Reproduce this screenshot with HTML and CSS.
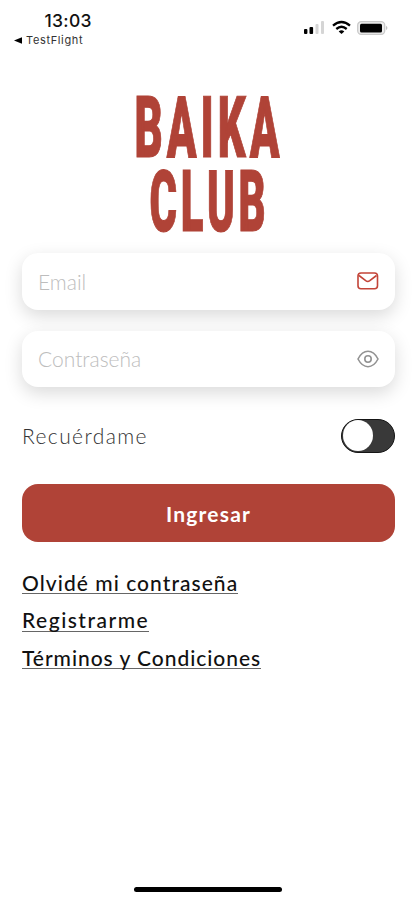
FILE: index.html
```html
<!DOCTYPE html>
<html lang="es">
<head>
<meta charset="utf-8">
<meta name="viewport" content="width=device-width, initial-scale=1">
<title>Baika Club</title>
<link rel="stylesheet" href="styles.css">
</head>
<body>
<header class="status">
  <div class="status-left">
    <div class="clock">13:03</div>
    <div class="back"><svg width="8" height="7" viewBox="0 0 8 7"><path d="M0 3.5 8 .2v6.6z"/></svg><span>TestFlight</span></div>
  </div>
  <svg class="indicators" width="86" height="16" viewBox="0 0 86 16">
    <g><rect x="1" y="9" width="3.4" height="5" rx="1"/><rect x="6.5" y="7" width="3.6" height="7" rx="1"/></g>
    <g fill="#d5d5d5"><rect x="12.5" y="4" width="3" height="10" rx="1"/><rect x="18" y="1" width="3" height="13" rx="1"/></g>
    <g fill="none" stroke="#000" stroke-width="2.3"><path d="M30 5.6q8.500-7.200 17 0"/><path d="M33.300 9q5.200-4.400 10.400 0"/></g>
    <path d="M35.700 11.400q2.800-2.200 5.600 0L38.500 14z"/>
    <rect x="54.700" y="1.700" width="27" height="12.600" rx="3.500" fill="#eee" stroke="#c9c9c9" stroke-width="1.300"/>
    <rect x="57" y="3.700" width="22" height="8.800" rx="1.500"/>
    <path d="M83.300 5.800q2 2.200 0 4.400z" fill="#aaa"/>
  </svg>
</header>
<main>
  <svg class="logo" width="170" height="142" viewBox="122 92 170 142" role="img" aria-label="Baika Club">
    <text transform="translate(134.500 156.500)scale(1 1.920)" textLength="149" lengthAdjust="spacingAndGlyphs">BAIKA</text>
    <text transform="translate(149.500 231)scale(1 1.920)" textLength="120" lengthAdjust="spacingAndGlyphs">CLUB</text>
  </svg>
  <form class="form">
    <div class="field"><span class="email">Email</span>
      <svg class="mail" width="22" height="18" viewBox="0 0 22 18"><rect x="1" y="1" width="19.500" height="15.800" rx="3"/><path d="M2 3.500 8.700 8.700q2.050 1.500 4.100 0L19.500 3.500"/></svg>
    </div>
    <div class="field"><span class="password">Contraseña</span>
      <svg class="eye" width="22" height="18" viewBox="0 0 22 18"><path d="M1 9Q5 1.300 11 1.300T21 9Q17 16.700 11 16.700T1 9z"/><circle cx="11" cy="9" r="3.200"/></svg>
    </div>
    <div class="remember"><span>Recuérdame</span><div class="toggle"><i></i></div></div>
    <button class="submit" type="button"><span>Ingresar</span></button>
  </form>
  <nav class="links"><a class="forgot">Olvidé mi contraseña</a><a class="register">Registrarme</a><a class="terms">Términos y Condiciones</a></nav>
</main>
<div class="home"></div>
</body>
</html>
```
FILE: styles.css
```css
* { box-sizing: border-box; }
body {
  margin: 0;
  height: 900px;
  display: flex;
  flex-direction: column;
  background: #fff;
  color: #111;
  font-family: Lato, sans-serif;
  overflow: hidden;
}
.status {
  height: 92px;
  display: flex;
  justify-content: space-between;
  padding: 10px 26px 0 14px;
  font-family: Inter, sans-serif;
}
.clock { margin-left: 30.500px; font-size: 17.500px; line-height: 21px; font-weight: 500; letter-spacing: .3px; }
.back { display: flex; align-items: center; gap: 4px; font-size: 11px; line-height: 18px; letter-spacing: .65px; color: #333; }
.indicators { margin-top: 10px; }
main { display: flex; flex-direction: column; }
.logo { display: block; margin-left: 122px; overflow: visible; }
.logo text { font: 900 44px Roboto, sans-serif; letter-spacing: 4px; fill: #b04337; stroke: #b04337; stroke-width: .6px; }
.form { margin: 19px 20px 0 22px; }
.field {
  height: 56.500px;
  display: flex;
  justify-content: space-between;
  align-items: center;
  padding: 0 16px;
  border-radius: 16px;
  background: #fff;
  box-shadow: 0 6px 18px rgba(0, 0, 0, .15);
  font-size: 21px;
  font-weight: 300;
  color: #bdbdbd;
}
.field + .field { margin-top: 21px; }
.field svg { fill: none; stroke-width: 1.6; }
.mail { stroke: #c34438; }
.eye { stroke: #929292; }
.remember {
  height: 97px;
  display: flex;
  justify-content: space-between;
  align-items: center;
  font-size: 21px;
  font-weight: 300;
  color: #333;
}
.remember span { letter-spacing: 1.4px; }
.toggle { width: 54px; height: 34px; padding: .5px; border-radius: 17px; background: #393939; border: 1px solid #151515; }
.toggle i { display: block; width: 30px; height: 31px; border-radius: 50%; background: #fff; }
.submit {
  display: block;
  width: 100%;
  height: 58px;
  padding: 0;
  border: 0;
  border-radius: 16px;
  background: #b04337;
  color: #fff;
  font: 700 21px Lato, sans-serif;
  letter-spacing: 1.2px;
}
.links {
  display: flex;
  flex-direction: column;
  align-items: flex-start;
  margin: 29px 0 0 22px;
  gap: 14px;
  font-size: 21px;
  line-height: 23.500px;
  font-weight: 500;
}
.links a { height: 23.300px; border-bottom: 1px solid #666; letter-spacing: 1.050px; white-space: nowrap; }
.links .register { letter-spacing: 1.500px; }
.links .terms { letter-spacing: .960px; }
.home { width: 148px; height: 5px; margin: auto 0 8px 134px; border-radius: 3px; background: #000; }
```
